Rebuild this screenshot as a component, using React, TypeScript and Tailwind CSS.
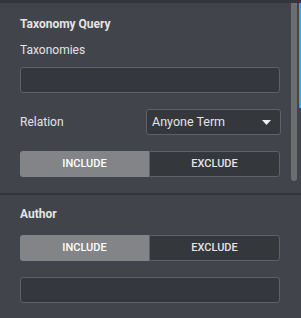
export default function App() {
  return (
    <div
      className="relative h-[318px] w-[301px] overflow-hidden border-t-[3px] border-[#33363b] bg-[#41444b] text-[#e3e4e6]"
      style={{ fontFamily: 'Roboto, "Liberation Sans", sans-serif' }}
    >
      <section className="flex flex-col px-5 pt-[13px] pb-4">
        <h3 className="text-[12px] leading-4 font-bold">Taxonomy Query</h3>
        <label className="mt-[10px] text-[12px] leading-4">Taxonomies</label>
        <div className="mt-[9px] h-[26px] w-[260px] rounded-[3px] border border-[#5e6166] bg-[#34373c]" />
        <div className="mt-4 flex items-center justify-between">
          <span className="text-[12px] leading-4">Relation</span>
          <div className="flex h-[26px] w-[135px] items-center justify-between rounded-[3px] border border-[#5e6166] bg-[#34373c] pr-[9px] pl-[5px]">
            <span className="text-[12.5px]">Anyone Term</span>
            <svg width="9" height="5" viewBox="0 0 9 5">
              <path d="M0 0h9L4.5 5z" fill="#f0f0f0" />
            </svg>
          </div>
        </div>
        <div className="mt-4 flex h-[26px] w-[260px] text-[11px] font-medium">
          <button className="flex-1 rounded-l-[3px] bg-[#838487] text-white">INCLUDE</button>
          <button className="flex-1 rounded-r-[3px] border border-[#5e6166] bg-[#34373c]">EXCLUDE</button>
        </div>
      </section>
      <div className="h-[2px] bg-[#33363b]" />
      <section className="flex flex-col px-5 pt-[11px]">
        <h3 className="text-[12px] leading-4 font-bold">Author</h3>
        <div className="mt-[13px] flex h-[26px] w-[260px] text-[11px] font-medium">
          <button className="flex-1 rounded-l-[3px] bg-[#838487] text-white">INCLUDE</button>
          <button className="flex-1 rounded-r-[3px] border border-[#5e6166] bg-[#34373c]">EXCLUDE</button>
        </div>
        <div className="mt-4 h-[26px] w-[260px] rounded-[3px] border border-[#5e6166] bg-[#34373c]" />
      </section>
      <div className="absolute top-[-3px] right-[4px] h-[181px] w-[6px] rounded-b-[3px] bg-[#6c6e72]" />
      <div className="absolute top-[-3px] right-0 h-[108px] w-[2px] bg-[#3aa8e0]" />
    </div>
  )
}
